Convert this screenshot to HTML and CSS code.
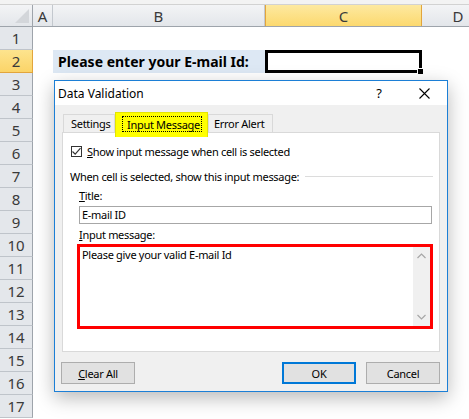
FILE: index.html
```html
<!DOCTYPE html>
<html>
<head>
<meta charset="utf-8">
<link rel="stylesheet" href="styles.css">
</head>
<body>
<div class="app">
  <div class="top-strip"></div>
  <div class="col-headers">
    <div class="ch corner"><span class="tri"></span></div>
    <div class="ch col-a">A</div>
    <div class="ch col-b">B</div>
    <div class="ch col-c sel">C</div>
    <div class="ch col-d">D</div>
  </div>
  <div class="row"><div class="rh">1</div></div>
  <div class="row">
    <div class="rh sel">2</div>
    <div class="cell col-a"></div>
    <div class="cell col-b prompt">Please enter your E-mail Id:</div>
    <div class="cell col-c active"><span class="handle"></span></div>
  </div>
  <div class="row"><div class="rh">3</div></div>
  <div class="row"><div class="rh">4</div></div>
  <div class="row"><div class="rh">5</div></div>
  <div class="row"><div class="rh">6</div></div>
  <div class="row"><div class="rh">7</div></div>
  <div class="row"><div class="rh">8</div></div>
  <div class="row"><div class="rh">9</div></div>
  <div class="row"><div class="rh">10</div></div>
  <div class="row"><div class="rh">11</div></div>
  <div class="row"><div class="rh">12</div></div>
  <div class="row"><div class="rh">13</div></div>
  <div class="row"><div class="rh">14</div></div>
  <div class="row"><div class="rh">15</div></div>
  <div class="row"><div class="rh">16</div></div>
  <div class="row"><div class="rh">17</div></div>

  <div class="dialog">
    <div class="titlebar">
      <span class="dtitle">Data Validation</span>
      <span class="help">?</span>
      <span class="close">
        <svg width="11" height="11" viewBox="0 0 11 11"><path d="M0.5 0.5 L10.5 10.5 M10.5 0.5 L0.5 10.5" stroke="#000" stroke-width="1.1" fill="none"/></svg>
      </span>
    </div>
    <div class="dbody">
      <div class="tabs">
        <div class="tab tab-settings">Settings</div>
        <div class="tab active"><span class="focus">Input Message</span></div>
        <div class="tab tab-error">Error Alert</div>
      </div>
      <div class="panel">
        <div class="check-row">
          <span class="checkbox">
            <svg width="11" height="11" viewBox="0 0 11 11"><path d="M1.5 5.5 L4.2 8.2 L9.5 2.2" stroke="#333" stroke-width="1.2" fill="none"/></svg>
          </span>
          <span><u>S</u>how input message when cell is selected</span>
        </div>
        <div class="group-row">
          <span>When cell is selected, show this input message:</span>
          <span class="sep"></span>
        </div>
        <div class="label"><u>T</u>itle:</div>
        <div class="textbox">E-mail ID</div>
        <div class="label label-msg"><u>I</u>nput message:</div>
        <div class="msgbox">
          <div class="msgtext">Please give your valid E-mail Id</div>
          <div class="scrollbar">
            <svg width="9" height="6" viewBox="0 0 9 6"><path d="M0.5 5 L4.5 1 L8.5 5" stroke="#a6a6a6" stroke-width="1.2" fill="none"/></svg>
            <svg width="9" height="6" viewBox="0 0 9 6"><path d="M0.5 1 L4.5 5 L8.5 1" stroke="#a6a6a6" stroke-width="1.2" fill="none"/></svg>
          </div>
        </div>
      </div>
      <div class="buttons">
        <div class="btn btn-clear"><u>C</u>lear All</div>
        <div class="btn btn-ok">OK</div>
        <div class="btn">Cancel</div>
      </div>
    </div>
  </div>
</div>
</body>
</html>
```
FILE: styles.css
```css
* { box-sizing: border-box; }
body { margin: 0; background: #fff; font-family: "Noto Sans", sans-serif; }
.app { position: relative; width: 469px; height: 419px; overflow: hidden; background: #fff; }

.top-strip { height: 5px; background: #f3f3f3; border-bottom: 1px solid #d2d2d2; }

.col-headers { display: flex; height: 22px; background: linear-gradient(#f3f4f6, #e3e6ea); border-bottom: 1px solid #9ea4ab; }
.ch { flex: none; display: flex; align-items: center; justify-content: center; border-right: 1px solid #c3c8ce; font-size: 15px; color: #3a3a3a; }
.corner { width: 33px; position: relative; border-right: 1px solid #9ea4ab; }
.tri { position: absolute; right: 3px; bottom: 3px; width: 0; height: 0; border-left: 14px solid transparent; border-bottom: 14px solid #d3d6da; }
.col-a { width: 20px; }
.col-b { width: 212px; }
.col-c { width: 157px; }
.col-d { width: 72px; border-right: none; }
.ch.sel { background: linear-gradient(#fde9a0, #fcd96f); border-left: 1px solid #e2a53c; border-right: 1px solid #e2a53c; color: #3a3a3a; }

.row { display: flex; height: 23px; }
.rh { width: 33px; flex: none; display: flex; align-items: center; justify-content: center; background: #e4e7eb; border-right: 1px solid #9ea4ab; border-bottom: 1px solid #bfc4ca; font-size: 15px; color: #3a3a3a; }
.rh.sel { background: linear-gradient(#fde48e, #fbd468); border-right: 1px solid #e2a53c; border-bottom: 1px solid #e2a53c; }
.cell { flex: none; height: 23px; }
.prompt { background: #dde8f4; font-weight: bold; font-size: 14px; color: #000; display: flex; align-items: center; padding-left: 5px; white-space: nowrap; }
.active { position: relative; border: 3px solid #000; }
.handle { position: absolute; right: -5px; bottom: -5px; width: 7px; height: 7px; background: #000; border: 1px solid #fff; }

.dialog { position: absolute; left: 54px; top: 80px; width: 394px; height: 312px; border: 1px solid #1c7fd6; background: #f0f0f0; box-shadow: 0 6px 18px rgba(0,0,0,0.28); display: flex; flex-direction: column; font-size: 11px; letter-spacing: -0.3px; color: #000; white-space: nowrap; }
.titlebar { height: 24px; background: #fff; display: flex; align-items: center; padding-left: 3px; font-size: 12px; letter-spacing: 0; }
.dtitle { flex: 1; }
.help { width: 44px; text-align: center; font-size: 13px; }
.close { width: 46px; display: flex; justify-content: center; }

.dbody { flex: 1; display: flex; flex-direction: column; padding: 7px; }
.tabs { display: flex; height: 20px; padding-left: 1px; align-items: flex-start; }
.tab { height: 18px; margin-top: 2px; border: 1px solid #d9d9d9; border-bottom: none; background: #f0f0f0; display: flex; align-items: center; }
.tab-settings { width: 52px; padding-left: 7px; }
.tab.active { position: relative; z-index: 2; height: 25px; margin-top: 0; width: 93px; background: #ffff00; border-color: #e4e400; padding: 3px 5px 5px 6px; align-items: stretch; }
.tab-error { width: 65px; padding-left: 5px; }
.focus { flex: 1; border: 1px dotted #000; display: flex; align-items: center; padding-left: 4px; }

.panel { height: 220px; background: #fff; border: 1px solid #d9d9d9; padding: 0 6px 0 7px; display: flex; flex-direction: column; }
.check-row { display: flex; align-items: center; height: 16px; margin-top: 10px; }
.checkbox { width: 11px; height: 11px; border: 1px solid #333; margin: 0 5px 0 1px; display: flex; background: #fff; }
.checkbox svg { margin: -1px; }
.group-row { display: flex; align-items: center; height: 16px; margin-top: 9px; }
.sep { flex: 1; height: 1px; background: #dcdcdc; margin-left: 6px; }
.label { height: 16px; line-height: 16px; margin-top: 4px; padding-left: 9px; }
.label-msg { margin-top: 3px; }
.textbox { height: 18px; margin: 2px 0 0 9px; border: 1px solid #a7a7a7; padding-left: 2px; line-height: 16px; width: 353px; }
.msgbox { margin: 1px 0 0 7px; width: 356px; height: 85px; border: 3px solid #ff0000; display: flex; background: #fff; }
.msgtext { flex: 1; padding: 1px 0 0 2px; line-height: 14px; }
.scrollbar { width: 17px; background: #f0f0f0; display: flex; flex-direction: column; justify-content: space-between; align-items: center; padding: 6px 0 6px; }

.buttons { display: flex; margin-top: 10px; gap: 10px; margin-left: -1px; }
.btn { width: 74px; height: 22px; background: #e1e1e1; border: 1px solid #adadad; display: flex; align-items: center; justify-content: center; }
.btn-clear { margin-right: auto; }
.btn-ok { border: 2px solid #0078d7; }
```
